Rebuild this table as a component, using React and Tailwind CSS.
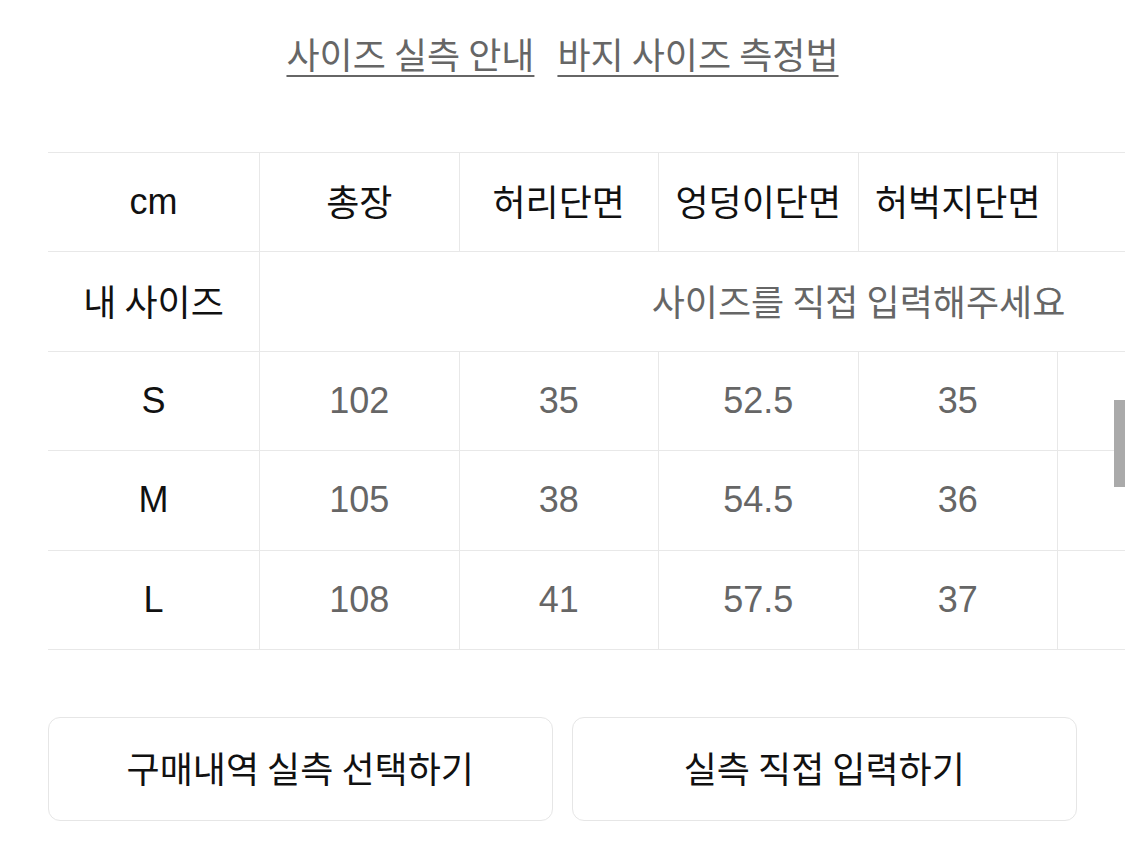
import React from "react";

const cols = ["총장", "허리단면", "엉덩이단면", "허벅지단면", "", ""];
const rows = [
  { s: "S", v: ["102", "35", "52.5", "35", "", ""] },
  { s: "M", v: ["105", "38", "54.5", "36", "", ""] },
  { s: "L", v: ["108", "41", "57.5", "37", "", ""] },
];

function Cell({ children, first, gray, latin }) {
  return (
    <div
      className={
        (first ? "w-[212px] " : "w-[199.5px] ") +
        "shrink-0 h-full flex items-center justify-center border-r border-[#e8e8e8] " +
        (gray ? "text-[#666666] " : "text-[#111111] ") +
        (latin ? "font-['Liberation_Sans','Noto_Sans_CJK_KR',sans-serif]" : "pb-[4px]")
      }
    >
      {children}
    </div>
  );
}

export default function App() {
  return (
    <div
      className="relative w-[1125px] h-[844px] bg-white overflow-hidden text-[36px]"
      style={{ fontFamily: '"Noto Sans CJK KR", "Liberation Sans", sans-serif' }}
    >
      <div className="flex justify-center gap-[23px] pt-[31px] leading-[44px] text-[#666666]">
        <span className="underline decoration-2 underline-offset-[6px]">사이즈 실측 안내</span>
        <span className="underline decoration-2 underline-offset-[6px]">바지 사이즈 측정법</span>
      </div>

      <div className="ml-[48px] mt-[77px] overflow-hidden">
        <div className="w-[1409px]">
          <div className="flex h-[100.4px] border-t border-b border-[#e8e8e8]">
            <Cell first latin>cm</Cell>
            {cols.map((c, i) => (
              <Cell key={i}>{c}</Cell>
            ))}
          </div>
          <div className="flex h-[99.4px] border-b border-[#e8e8e8]">
            <Cell first>내 사이즈</Cell>
            <div className="w-[1197px] h-full pb-[4px] flex items-center justify-center text-[#666666]">
              사이즈를 직접 입력해주세요
            </div>
          </div>
          {rows.map((r) => (
            <div key={r.s} className="flex h-[99.4px] border-b border-[#e8e8e8]">
              <Cell first latin>{r.s}</Cell>
              {r.v.map((v, i) => (
                <Cell key={i} gray latin>
                  {v}
                </Cell>
              ))}
            </div>
          ))}
        </div>
      </div>

      <div className="flex gap-[19px] px-[48px] mt-[67px]">
        <button className="w-[505px] h-[104px] pb-[4px] rounded-[12px] border-[1.5px] border-[#e6e6e6] bg-white text-[#111111] flex items-center justify-center">
          구매내역 실측 선택하기
        </button>
        <button className="w-[506px] h-[104px] pb-[4px] rounded-[12px] border-[1.5px] border-[#e6e6e6] bg-white text-[#111111] flex items-center justify-center">
          실측 직접 입력하기
        </button>
      </div>

      <div className="absolute right-0 top-[400px] w-[11px] h-[87px] bg-[#aaaaaa]" />
    </div>
  );
}
